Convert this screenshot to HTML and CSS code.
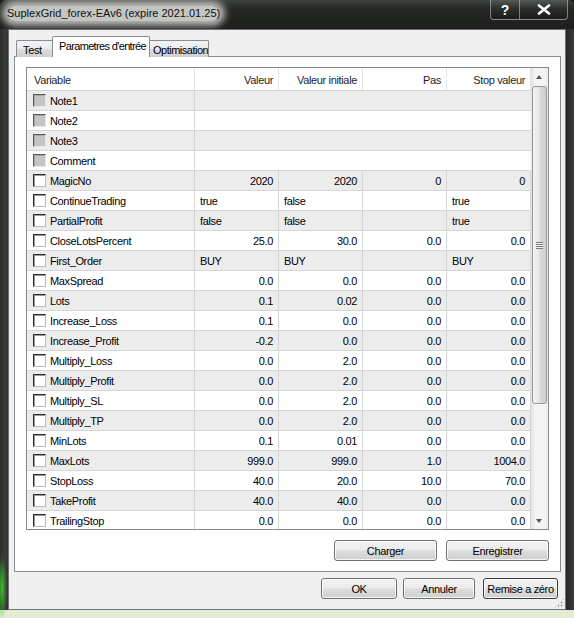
FILE: index.html
```html
<!DOCTYPE html>
<html lang="fr">
<head>
  <meta charset="UTF-8">
  <title>SuplexGrid_forex-EAv6</title>
  <link rel="stylesheet" href="styles.css">
</head>
<body>

  <div class="window">
    <div class="titlebar">
      <span class="title">SuplexGrid_forex-EAv6 (expire 2021.01.25)</span>
      <div class="caption-buttons">
        <span class="cap-btn help">?</span>
        <span class="cap-btn close">
          <svg width="14" height="11" viewBox="0 0 14 11"><path d="M2 1.5 L12 9.5 M12 1.5 L2 9.5" stroke="#fff" stroke-width="2.6" stroke-linecap="round"/></svg>
        </span>
      </div>
    </div>

    <div class="client">
      <div class="tabs">
        <div class="tab tab-test">Test</div>
        <div class="tab active">Parametres d'entrée</div>
        <div class="tab tab-opt">Optimisation</div>
      </div>

      <div class="tab-panel">
        <div class="listview">
          <div class="list-body">
            <div class="row list-header">
              <div class="cell">Variable</div>
              <div class="cell num">Valeur</div>
              <div class="cell num">Valeur initiale</div>
              <div class="cell num">Pas</div>
              <div class="cell num">Stop valeur</div>
            </div>

            <div class="row alt"><div class="cell var"><span class="check disabled"></span>Note1</div><div class="cell span"></div></div>
            <div class="row"><div class="cell var"><span class="check disabled"></span>Note2</div><div class="cell span"></div></div>
            <div class="row alt"><div class="cell var"><span class="check disabled"></span>Note3</div><div class="cell span"></div></div>
            <div class="row"><div class="cell var"><span class="check disabled"></span>Comment</div><div class="cell span"></div></div>
            <div class="row alt"><div class="cell var"><span class="check"></span>MagicNo</div><div class="cell num">2020</div><div class="cell num">2020</div><div class="cell num">0</div><div class="cell num">0</div></div>
            <div class="row"><div class="cell var"><span class="check"></span>ContinueTrading</div><div class="cell">true</div><div class="cell">false</div><div class="cell"></div><div class="cell">true</div></div>
            <div class="row alt"><div class="cell var"><span class="check"></span>PartialProfit</div><div class="cell">false</div><div class="cell">false</div><div class="cell"></div><div class="cell">true</div></div>
            <div class="row"><div class="cell var"><span class="check"></span>CloseLotsPercent</div><div class="cell num">25.0</div><div class="cell num">30.0</div><div class="cell num">0.0</div><div class="cell num">0.0</div></div>
            <div class="row alt"><div class="cell var"><span class="check"></span>First_Order</div><div class="cell">BUY</div><div class="cell">BUY</div><div class="cell"></div><div class="cell">BUY</div></div>
            <div class="row"><div class="cell var"><span class="check"></span>MaxSpread</div><div class="cell num">0.0</div><div class="cell num">0.0</div><div class="cell num">0.0</div><div class="cell num">0.0</div></div>
            <div class="row alt"><div class="cell var"><span class="check"></span>Lots</div><div class="cell num">0.1</div><div class="cell num">0.02</div><div class="cell num">0.0</div><div class="cell num">0.0</div></div>
            <div class="row"><div class="cell var"><span class="check"></span>Increase_Loss</div><div class="cell num">0.1</div><div class="cell num">0.0</div><div class="cell num">0.0</div><div class="cell num">0.0</div></div>
            <div class="row alt"><div class="cell var"><span class="check"></span>Increase_Profit</div><div class="cell num">-0.2</div><div class="cell num">0.0</div><div class="cell num">0.0</div><div class="cell num">0.0</div></div>
            <div class="row"><div class="cell var"><span class="check"></span>Multiply_Loss</div><div class="cell num">0.0</div><div class="cell num">2.0</div><div class="cell num">0.0</div><div class="cell num">0.0</div></div>
            <div class="row alt"><div class="cell var"><span class="check"></span>Multiply_Profit</div><div class="cell num">0.0</div><div class="cell num">2.0</div><div class="cell num">0.0</div><div class="cell num">0.0</div></div>
            <div class="row"><div class="cell var"><span class="check"></span>Multiply_SL</div><div class="cell num">0.0</div><div class="cell num">2.0</div><div class="cell num">0.0</div><div class="cell num">0.0</div></div>
            <div class="row alt"><div class="cell var"><span class="check"></span>Multiply_TP</div><div class="cell num">0.0</div><div class="cell num">2.0</div><div class="cell num">0.0</div><div class="cell num">0.0</div></div>
            <div class="row"><div class="cell var"><span class="check"></span>MinLots</div><div class="cell num">0.1</div><div class="cell num">0.01</div><div class="cell num">0.0</div><div class="cell num">0.0</div></div>
            <div class="row alt"><div class="cell var"><span class="check"></span>MaxLots</div><div class="cell num">999.0</div><div class="cell num">999.0</div><div class="cell num">1.0</div><div class="cell num">1004.0</div></div>
            <div class="row"><div class="cell var"><span class="check"></span>StopLoss</div><div class="cell num">40.0</div><div class="cell num">20.0</div><div class="cell num">10.0</div><div class="cell num">70.0</div></div>
            <div class="row alt"><div class="cell var"><span class="check"></span>TakeProfit</div><div class="cell num">40.0</div><div class="cell num">40.0</div><div class="cell num">0.0</div><div class="cell num">0.0</div></div>
            <div class="row"><div class="cell var"><span class="check"></span>TrailingStop</div><div class="cell num">0.0</div><div class="cell num">0.0</div><div class="cell num">0.0</div><div class="cell num">0.0</div></div>
          </div>

          <div class="scrollbar">
            <div class="sb-arrow up"></div>
            <div class="sb-track">
              <div class="sb-thumb"><span class="grip"></span></div>
            </div>
            <div class="sb-arrow down"></div>
          </div>
        </div>

        <div class="panel-buttons">
          <button class="btn wide">Charger</button>
          <button class="btn wide">Enregistrer</button>
        </div>
      </div>

      <div class="dialog-buttons">
        <button class="btn btn-ok">OK</button>
        <button class="btn btn-cancel">Annuler</button>
        <button class="btn btn-reset">Remise a zéro</button>
      </div>

      <span class="size-grip"></span>
    </div>
  </div>

</body>
</html>
```

FILE: styles.css
```css
body {
  margin: 0;
  font-family: 'Liberation Sans', Arial, sans-serif;
  font-size: 11px;
  letter-spacing: -0.35px;
  color: #000;
  background: #1b1d1b;
}

.window {
  width: 574px;
  height: 618px;
  display: flex;
  flex-direction: column;
  box-sizing: border-box;
  border-radius: 6px 6px 0 0;
  overflow: hidden;
  background:
    radial-gradient(circle at 366px 24px, rgba(90, 220, 50, 0.9) 0, rgba(90, 220, 50, 0) 7px),
    radial-gradient(ellipse 5px 34px at 2px 588px, rgba(60, 200, 40, 0.95), rgba(60, 200, 40, 0)),
    linear-gradient(#e4ecd4, #e4ecd4) 0 100% / 100% 8px no-repeat,
    linear-gradient(90deg, #2c2f2c 0, #3a3d3a 6px, #2a2c2a 9px, #1e201e 50%, #111 97%, #3a3a3a 100%);
}

/* title bar */

.titlebar {
  height: 29px;
  flex: none;
  display: flex;
  justify-content: space-between;
  align-items: flex-start;
  background: linear-gradient(180deg, #3e423e 0, #262926 8px, #1c1e1c 100%);
  border-radius: 6px 6px 0 0;
}

.title {
  margin: 6px 0 0 7px;
  font-size: 11px;
  letter-spacing: 0;
  line-height: 15px;
  color: #111;
  background: rgba(210, 212, 208, 0.92);
  border-radius: 8px;
  box-shadow: 0 0 7px 5px rgba(210, 212, 208, 0.85);
}

.caption-buttons {
  display: flex;
  margin-right: 6px;
}

.cap-btn {
  height: 19px;
  display: flex;
  align-items: center;
  justify-content: center;
  border: 1px solid rgba(200, 200, 200, 0.55);
  border-top: none;
  background: linear-gradient(180deg, rgba(255, 255, 255, 0.12), rgba(255, 255, 255, 0.02) 55%, rgba(0, 0, 0, 0.2));
  color: #fff;
  font-weight: bold;
  font-size: 14px;
  letter-spacing: 0;
}

.cap-btn.help {
  width: 28px;
  border-right: none;
  border-radius: 0 0 0 4px;
}

.cap-btn.close {
  width: 47px;
  border-radius: 0 0 4px 0;
}

/* client area */

.client {
  flex: 1;
  margin: 0 8px 8px;
  border: 1px solid #6f736f;
  background-color: #f0f0f0;
  padding: 7px 4px 0 5px;
  position: relative;
}

.tabs {
  display: flex;
  align-items: flex-end;
  height: 20px;
  padding-left: 2px;
  margin-bottom: -1px;
  position: relative;
  z-index: 1;
}

.tab {
  height: 17px;
  line-height: 18px;
  box-sizing: border-box;
  padding-left: 6px;
  border: 1px solid #898c95;
  border-bottom: none;
  border-radius: 2px 2px 0 0;
  background: linear-gradient(180deg, #f3f3f3, #ebebeb 50%, #dddddd 51%, #cfcfcf);
  white-space: nowrap;
  overflow: hidden;
}

.tab-test {
  width: 38px;
  border-right: none;
}

.tab-opt {
  width: 61px;
  border-left: none;
  padding-left: 5px;
  letter-spacing: -0.5px;
}

.tab.active {
  width: 98px;
  height: 21px;
  line-height: 18px;
  margin: 0 -2px;
  letter-spacing: -0.65px;
  background: #fff;
  border-left: 1px solid #898c95;
  border-right: 1px solid #898c95;
  position: relative;
  z-index: 2;
}

.tab-panel {
  height: 516px;
  box-sizing: border-box;
  border: 1px solid #898c95;
  background-color: #fff;
  padding: 10px 11px 0 11px;
}

/* list view */

.listview {
  height: 463px;
  box-sizing: border-box;
  border: 1px solid #828790;
  display: flex;
}

.list-body {
  width: 504px;
  overflow: hidden;
}

.row {
  display: grid;
  grid-template-columns: 168px 84px 84px 84px 84px;
  height: 20px;
  box-sizing: border-box;
  border-bottom: 1px solid #d6d6d6;
}

.row.alt {
  background-color: #ececec;
}

.cell {
  border-right: 1px solid #d6d6d6;
  padding: 1px 5px 0;
  line-height: 18px;
  white-space: nowrap;
  overflow: hidden;
}

.cell.num {
  text-align: right;
}

.cell.span {
  grid-column: 2 / 6;
  border-right: none;
}

.cell.var {
  display: flex;
  align-items: center;
  padding: 0 5px 0 6px;
}

.cell.var .check {
  margin-top: -1px;
}

.list-header {
  height: 23px;
  background-color: #fff;
  border-bottom-color: #d5d5d5;
}

.list-header .cell {
  padding-top: 3px;
  line-height: 18px;
  border-right-color: #e5e5e5;
  color: #1e1e1e;
}

.list-header .cell:first-child {
  padding-left: 7px;
}

.check {
  width: 13px;
  height: 13px;
  box-sizing: border-box;
  flex: none;
  margin-right: 4px;
  border: 1px solid;
  border-color: #2a2a2a #bcbcbc #bcbcbc #2a2a2a;
  background-color: #fff;
  box-shadow: inset 1px 1px 0 #9a9a9a;
}

.check.disabled {
  background-color: #c4c4c4;
  border-color: #5a5a5a #e8e8e8 #e8e8e8 #5a5a5a;
  box-shadow: inset 1px 1px 0 #a8a8a8;
}

/* scrollbar */

.scrollbar {
  width: 17px;
  display: flex;
  flex-direction: column;
  background: linear-gradient(90deg, #e2e2e2, #f4f4f4 25%, #f4f4f4 75%, #ececec);
}

.sb-arrow {
  height: 17px;
  flex: none;
  position: relative;
}

.sb-arrow::after {
  content: "";
  position: absolute;
  left: 5px;
  border-left: 3.5px solid transparent;
  border-right: 3.5px solid transparent;
}

.sb-arrow.up::after {
  top: 7px;
  border-bottom: 4px solid #555;
}

.sb-arrow.down::after {
  top: 7px;
  border-top: 4px solid #555;
}

.sb-track {
  flex: 1;
  padding: 1px 1px 0 1px;
}

.sb-thumb {
  height: 318px;
  box-sizing: border-box;
  border: 1px solid #979797;
  border-radius: 3px;
  background: linear-gradient(90deg, #f3f3f3, #e8e8e8 45%, #d9d9d9 55%, #cdcdcd);
  display: flex;
  align-items: center;
  justify-content: center;
}

.grip {
  width: 7px;
  height: 7px;
  background: repeating-linear-gradient(180deg, #7a7a7a 0 1px, #f2f2f2 1px 2px);
}

/* buttons */

.btn {
  height: 21px;
  box-sizing: border-box;
  padding: 0;
  font-family: 'Liberation Sans', Arial, sans-serif;
  font-size: 11px;
  letter-spacing: -0.35px;
  color: #000;
  border: 1px solid #707070;
  border-radius: 3px;
  background: linear-gradient(180deg, #f2f2f2 0%, #ebebeb 48%, #dddddd 52%, #cfcfcf 100%);
  box-shadow: inset 0 0 0 1px rgba(255, 255, 255, 0.8);
}

.panel-buttons {
  display: flex;
  justify-content: flex-end;
  gap: 9px;
  margin-top: 10px;
}

.btn.wide {
  width: 103px;
}

.dialog-buttons {
  display: flex;
  justify-content: flex-end;
  margin-top: 6px;
  padding-right: 3px;
}

.btn-ok {
  width: 76px;
}

.btn-cancel {
  width: 72px;
  margin-left: 6px;
}

.btn-reset {
  width: 75px;
  margin-left: 8px;
  border-color: #3c3c3c;
  white-space: nowrap;
}

.size-grip {
  position: absolute;
  right: 1px;
  bottom: 1px;
  width: 10px;
  height: 10px;
  background:
    radial-gradient(circle, #a8a8a8 0.8px, transparent 1.2px) 0 0 / 3px 3px;
  clip-path: polygon(100% 0, 100% 100%, 0 100%);
}
```
